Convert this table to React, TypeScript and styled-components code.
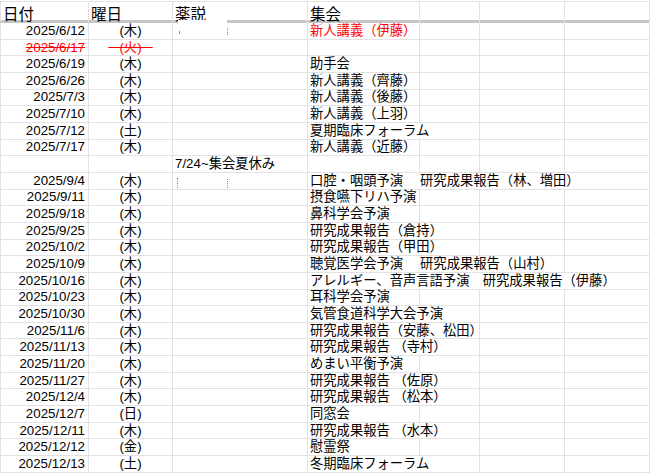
import React from 'react';
import styled, { createGlobalStyle } from 'styled-components';

const Global = createGlobalStyle`
  html, body { margin: 0; padding: 0; background: #fff; }
  body {
    font-family: "Liberation Sans", "Noto Sans CJK JP", sans-serif;
    color: #000;
  }
`;

const COLS = '88px 84px 135px 112px 60px 85px 85px';
const LINE = '#e2e2e2';

const Sheet = styled.div`
  width: 650px;
  padding-top: 1px;
`;

const HeaderRow = styled.div`
  display: grid;
  grid-template-columns: ${COLS};
  height: 22px;
  box-sizing: border-box;
  border-top: 1px solid ${LINE};
  border-left: 1px solid ${LINE};
  border-bottom: 3px solid #c6c6c6;
`;

const HeaderCell = styled.div`
  border-right: 1px solid ${LINE};
  display: flex;
  align-items: center;
  padding-left: 2px;
  font-size: 15.5px;
  white-space: nowrap;
`;

const Row = styled.div`
  display: grid;
  grid-template-columns: ${COLS};
  height: 16.67px;
  box-sizing: border-box;
  border-left: 1px solid ${LINE};
  border-bottom: 1px solid ${LINE};
`;

const Cell = styled.div<{ $span?: number; $align?: 'left' | 'right' | 'center'; $red?: boolean }>`
  position: relative;
  grid-column: span ${(p) => p.$span ?? 1};
  border-right: 1px solid ${LINE};
  display: flex;
  align-items: flex-end;
  justify-content: ${(p) =>
    p.$align === 'right' ? 'flex-end' : p.$align === 'center' ? 'center' : 'flex-start'};
  padding: 0 ${(p) => (p.$align === 'right' ? '3px' : '2px')};
  font-size: 13.3px;
  line-height: 14.8px;
  white-space: nowrap;
  min-width: 0;
  color: ${(p) => (p.$red ? '#ff0000' : '#000')};
`;

const Struck = styled.span`
  color: #ff0000;
  text-decoration: line-through;
  text-decoration-color: #ff0000;
  white-space: pre;
`;

const Redaction = styled.div`
  position: absolute;
  left: 5px;
  top: -3px;
  width: 49px;
  height: 15px;
  background: #fff;
`;

const Mark = styled.span<{ $left: number; $top: number; $h: number }>`
  position: absolute;
  left: ${(p) => p.$left}px;
  top: ${(p) => p.$top}px;
  height: ${(p) => p.$h}px;
  border-left: 1px dotted #8a8a8a;
`;

type R = {
  date: string;
  day: string;
  c?: string;
  d?: string;
  span?: number;
  red?: boolean;
  strike?: boolean;
  redact?: 1 | 2;
};

const rows: R[] = [
  { date: '2025/6/12', day: '(木)', d: '新人講義（伊藤）', red: true, redact: 1 },
  { date: '2025/6/17', day: '(火)', strike: true },
  { date: '2025/6/19', day: '(木)', d: '助手会' },
  { date: '2025/6/26', day: '(木)', d: '新人講義（齊藤）' },
  { date: '2025/7/3', day: '(木)', d: '新人講義（後藤）' },
  { date: '2025/7/10', day: '(木)', d: '新人講義（上羽）' },
  { date: '2025/7/12', day: '(土)', d: '夏期臨床フォーラム', span: 2 },
  { date: '2025/7/17', day: '(木)', d: '新人講義（近藤）' },
  { date: '', day: '', c: '7/24~集会夏休み' },
  { date: '2025/9/4', day: '(木)', d: '口腔・咽頭予演\u3000 研究成果報告（林、増田）', span: 4, redact: 2 },
  { date: '2025/9/11', day: '(木)', d: '摂食嚥下リハ予演' },
  { date: '2025/9/18', day: '(木)', d: '鼻科学会予演' },
  { date: '2025/9/25', day: '(木)', d: '研究成果報告（倉持）', span: 2 },
  { date: '2025/10/2', day: '(木)', d: '研究成果報告（甲田）', span: 2 },
  { date: '2025/10/9', day: '(木)', d: '聴覚医学会予演\u3000 研究成果報告（山村）', span: 3 },
  { date: '2025/10/16', day: '(木)', d: 'アレルギー、音声言語予演\u3000研究成果報告（伊藤）', span: 4 },
  { date: '2025/10/23', day: '(木)', d: '耳科学会予演' },
  { date: '2025/10/30', day: '(木)', d: '気管食道科学大会予演', span: 2 },
  { date: '2025/11/6', day: '(木)', d: '研究成果報告（安藤、松田）', span: 2 },
  { date: '2025/11/13', day: '(木)', d: '研究成果報告 （寺村）', span: 2 },
  { date: '2025/11/20', day: '(木)', d: 'めまい平衡予演' },
  { date: '2025/11/27', day: '(木)', d: '研究成果報告 （佐原）', span: 2 },
  { date: '2025/12/4', day: '(木)', d: '研究成果報告 （松本）', span: 2 },
  { date: '2025/12/7', day: '(日)', d: '同窓会' },
  { date: '2025/12/11', day: '(木)', d: '研究成果報告 （水本）', span: 2 },
  { date: '2025/12/12', day: '(金)', d: '慰霊祭' },
  { date: '2025/12/13', day: '(土)', d: '冬期臨床フォーラム', span: 2 },
];

export default function App() {
  return (
    <>
      <Global />
      <Sheet>
        <HeaderRow>
          <HeaderCell>日付</HeaderCell>
          <HeaderCell>曜日</HeaderCell>
          <HeaderCell>薬説</HeaderCell>
          <HeaderCell>集会</HeaderCell>
          <HeaderCell />
          <HeaderCell />
          <HeaderCell />
        </HeaderRow>
        {rows.map((r, i) => {
          const span = r.span ?? 1;
          const rest = 4 - span;
          return (
            <Row key={i}>
              <Cell $align="right">
                {r.strike ? <Struck>{r.date}</Struck> : r.date}
              </Cell>
              <Cell $align="center">
                {r.strike ? <Struck>{'\u00a0\u00a0\u00a0' + r.day + '\u00a0\u00a0\u00a0'}</Struck> : r.day}
              </Cell>
              <Cell $align="left">
                {r.c}
                {r.redact === 1 && (
                  <Redaction>
                    <Mark $left={1} $top={11} $h={2} />
                    <Mark $left={49} $top={8} $h={7} />
                  </Redaction>
                )}
                {r.redact === 2 && (
                  <>
                    <Mark $left={4} $top={5} $h={10} />
                    <Mark $left={54} $top={6} $h={9} />
                  </>
                )}
              </Cell>
              <Cell $align="left" $span={span} $red={r.red}>
                {r.d}
              </Cell>
              {Array.from({ length: rest }).map((_, k) => (
                <Cell key={k} />
              ))}
            </Row>
          );
        })}
      </Sheet>
    </>
  );
}
